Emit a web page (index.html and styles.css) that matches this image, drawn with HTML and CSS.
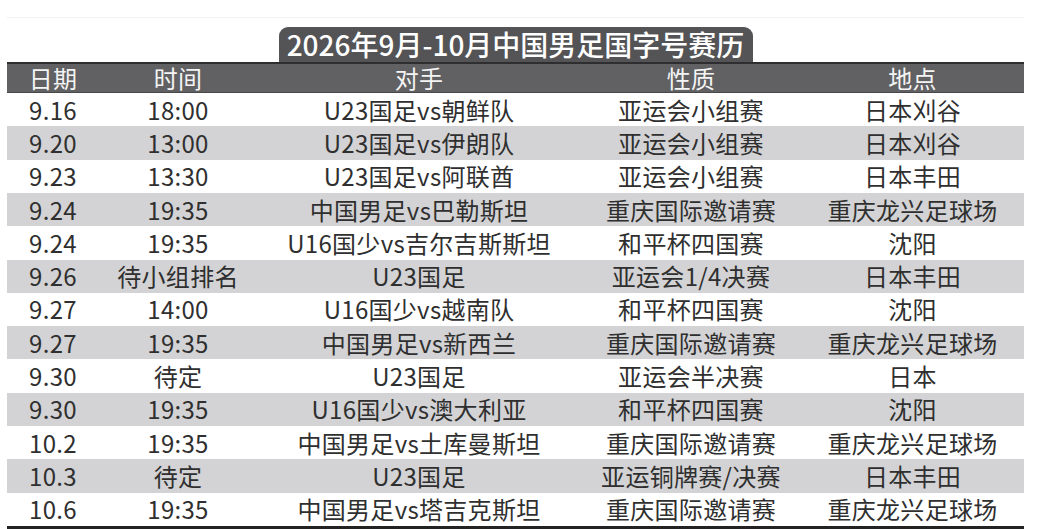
FILE: index.html
```html
<!DOCTYPE html>
<html lang="zh-CN">
<head>
<meta charset="utf-8">
<title>2026年9月-10月中国男足国字号赛历</title>
<link rel="stylesheet" href="styles.css">
</head>
<body>
<div class="page">
  <div class="tab-row"><div class="tab">2026年9月-10月中国男足国字号赛历</div></div>
  <div class="table">
    <div class="row head">
      <div>日期</div><div>时间</div><div>对手</div><div>性质</div><div>地点</div>
    </div>
    <div class="body">
      <div class="row"><div>9.16</div><div>18:00</div><div>U23国足vs朝鲜队</div><div>亚运会小组赛</div><div>日本刈谷</div></div>
      <div class="row alt"><div>9.20</div><div>13:00</div><div>U23国足vs伊朗队</div><div>亚运会小组赛</div><div>日本刈谷</div></div>
      <div class="row"><div>9.23</div><div>13:30</div><div>U23国足vs阿联酋</div><div>亚运会小组赛</div><div>日本丰田</div></div>
      <div class="row alt"><div>9.24</div><div>19:35</div><div>中国男足vs巴勒斯坦</div><div>重庆国际邀请赛</div><div>重庆龙兴足球场</div></div>
      <div class="row"><div>9.24</div><div>19:35</div><div>U16国少vs吉尔吉斯斯坦</div><div>和平杯四国赛</div><div>沈阳</div></div>
      <div class="row alt"><div>9.26</div><div>待小组排名</div><div>U23国足</div><div>亚运会1/4决赛</div><div>日本丰田</div></div>
      <div class="row"><div>9.27</div><div>14:00</div><div>U16国少vs越南队</div><div>和平杯四国赛</div><div>沈阳</div></div>
      <div class="row alt"><div>9.27</div><div>19:35</div><div>中国男足vs新西兰</div><div>重庆国际邀请赛</div><div>重庆龙兴足球场</div></div>
      <div class="row"><div>9.30</div><div>待定</div><div>U23国足</div><div>亚运会半决赛</div><div>日本</div></div>
      <div class="row alt"><div>9.30</div><div>19:35</div><div>U16国少vs澳大利亚</div><div>和平杯四国赛</div><div>沈阳</div></div>
      <div class="row"><div>10.2</div><div>19:35</div><div>中国男足vs土库曼斯坦</div><div>重庆国际邀请赛</div><div>重庆龙兴足球场</div></div>
      <div class="row alt"><div>10.3</div><div>待定</div><div>U23国足</div><div>亚运铜牌赛/决赛</div><div>日本丰田</div></div>
      <div class="row"><div>10.6</div><div>19:35</div><div>中国男足vs塔吉克斯坦</div><div>重庆国际邀请赛</div><div>重庆龙兴足球场</div></div>
    </div>
  </div>
</div>
</body>
</html>
```
FILE: styles.css
```css
html, body {
  margin: 0;
  padding: 0;
  background: #ffffff;
}
body {
  font-family: "Noto Sans CJK SC", "Noto Sans", sans-serif;
  color: #2f2f2f;
}
.page {
  width: 1017px;
  margin: 17px 0 0 7px;
  border-top: 1px solid #f2f2f2;
}
.tab-row {
  display: flex;
  justify-content: center;
  padding-top: 9px;
}
.tab {
  width: 474px;
  height: 35px;
  box-sizing: border-box;
  background: #545456;
  color: #ffffff;
  border-radius: 9px 9px 0 0;
  font-size: 28px;
  font-weight: 500;
  line-height: 35px;
  text-align: center;
}
.table {
  display: flex;
  flex-direction: column;
}
.row {
  display: grid;
  grid-template-columns: 92px 158px 324px 220px 223px;
  align-items: center;
  font-size: 24px;
  letter-spacing: 0.3px;
  text-align: center;
  white-space: nowrap;
}
.row > div {
  line-height: 1;
}
.head {
  height: 31px;
  box-sizing: border-box;
  background: #616163;
  border-top: 2px solid #2e2e30;
  border-bottom: 1px solid #48484a;
  color: #f4f4f4;
}
.body {
  height: 433px;
  display: grid;
  grid-template-rows: repeat(13, 1fr);
  border-bottom: 3px solid #232323;
}
.alt {
  background: #d3d3d5;
}
```
